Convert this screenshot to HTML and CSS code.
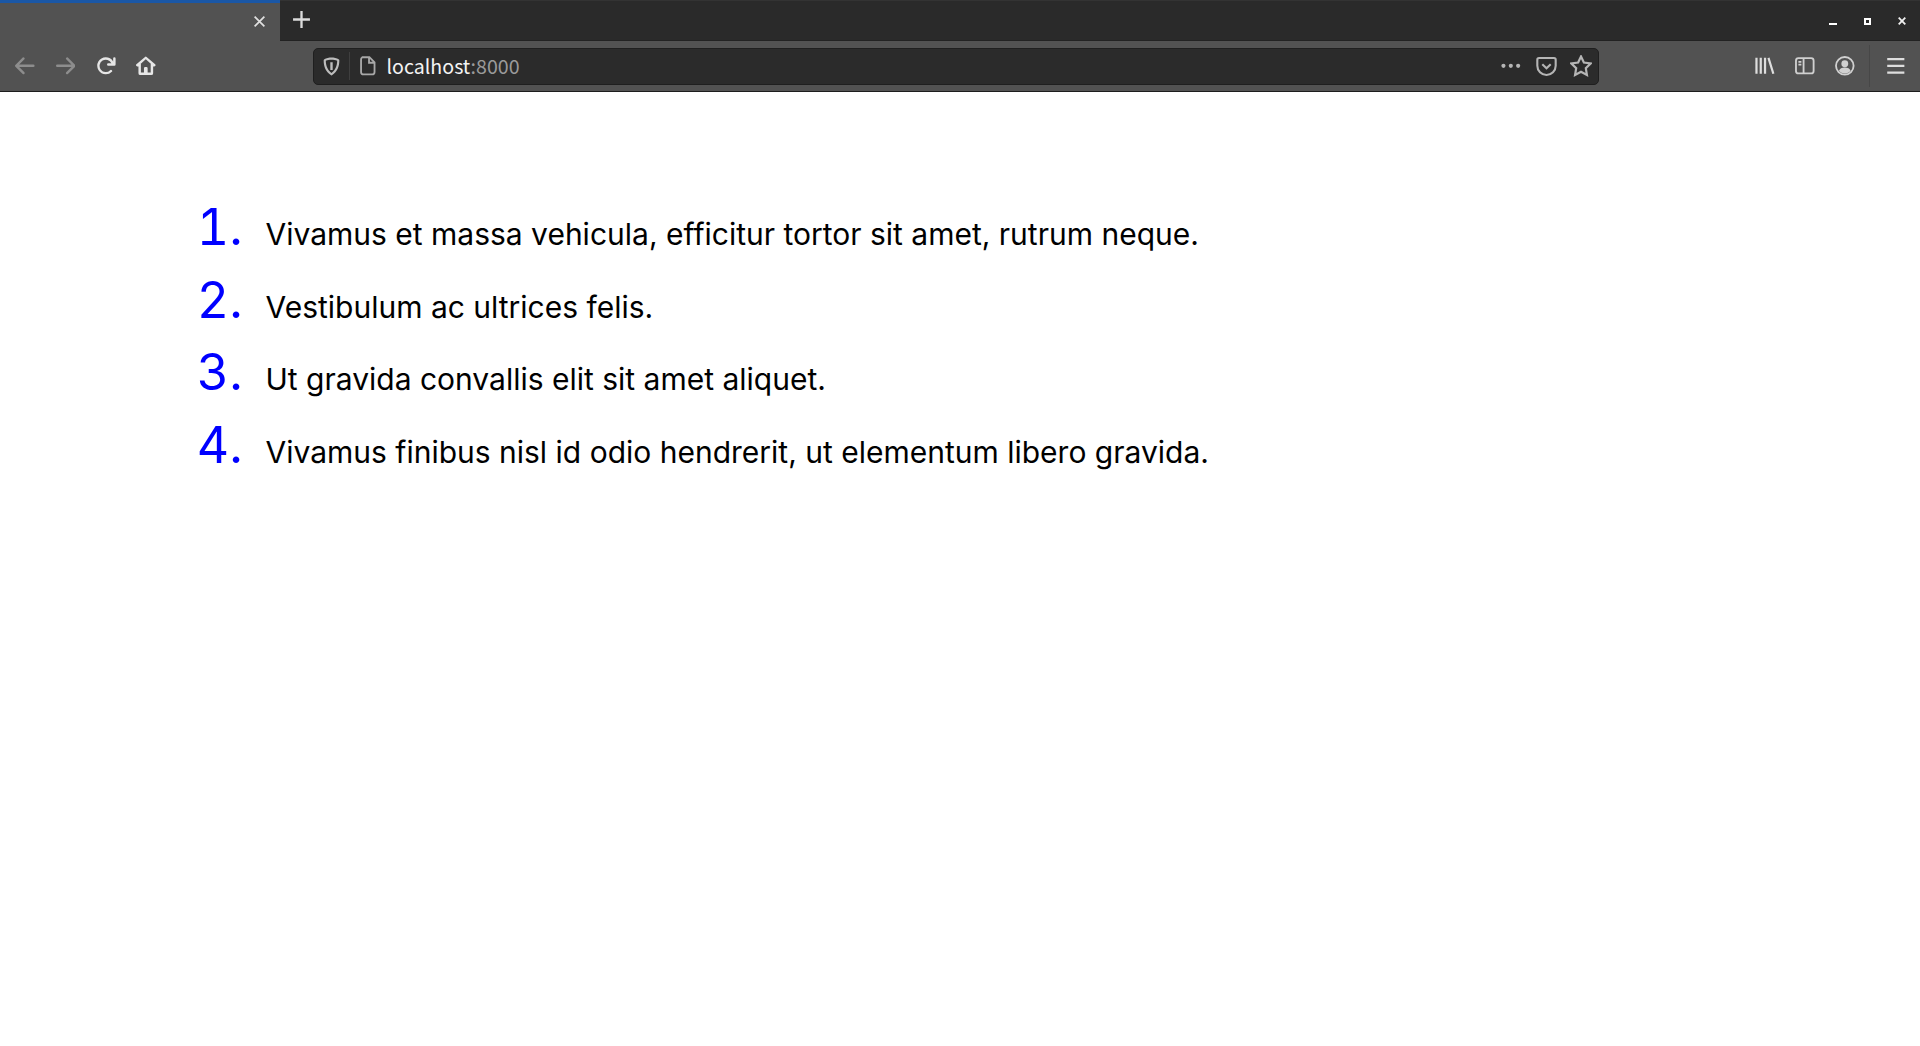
FILE: index.html
```html
<!DOCTYPE html>
<html lang="en">
<head>
<meta charset="utf-8">
<title>localhost:8000</title>
<link rel="stylesheet" href="styles.css">
</head>
<body>
<header class="browser">
  <div class="tabbar">
    <div class="tab">
      <svg class="tab-close" viewBox="0 0 12 12"><path d="M1.500 1.500l9 9M10.500 1.500l-9 9"/></svg>
    </div>
    <svg class="new-tab" viewBox="0 0 18 18"><path d="M9 1v16M1 9h16"/></svg>
    <div class="window-controls">
      <span class="win-min"></span>
      <span class="win-max"></span>
      <svg class="win-close" viewBox="0 0 8 8"><path d="M.7.7l6.600 6.600M7.300.7L.7 7.300"/></svg>
    </div>
  </div>
  <div class="toolbar">
    <div class="nav-buttons">
      <span class="btn"><svg class="ico dim" viewBox="0 0 16 16"><path d="M15 7H3.400l4.300-4.300a1 1 0 0 0-1.400-1.400l-6 6a1 1 0 0 0 0 1.400l6 6a1 1 0 0 0 1.400-1.400L3.400 9H15a1 1 0 0 0 0-2z"/></svg></span>
      <span class="btn"><svg class="ico dim" viewBox="0 0 16 16"><path d="M1 7h11.600L8.300 2.700a1 1 0 0 1 1.400-1.400l6 6a1 1 0 0 1 0 1.400l-6 6a1 1 0 0 1-1.400-1.400L12.600 9H1a1 1 0 0 1 0-2z"/></svg></span>
      <span class="btn"><svg class="ico" viewBox="0 0 16 16"><path d="M15 1a1 1 0 0 0-1 1v2.418A6.995 6.995 0 1 0 8 15a6.954 6.954 0 0 0 4.950-2.050 1 1 0 0 0-1.414-1.414A5.019 5.019 0 1 1 12.549 6H10a1 1 0 0 0 0 2h5a1 1 0 0 0 1-1V2a1 1 0 0 0-1-1z"/></svg></span>
      <span class="btn"><svg class="ico home" viewBox="0 0 16 16"><path fill-rule="evenodd" d="M8 .5a1 1 0 0 1 .65.24l7 6a1 1 0 0 1-.65 1.760h-1V14a1.500 1.500 0 0 1-1.500 1.500h-9A1.500 1.500 0 0 1 2 14V8.500H1a1 1 0 0 1-.65-1.760l7-6A1 1 0 0 1 8 .5zM8 2.700L3.700 6.500H4V13.500h2.500V10a1 1 0 0 1 1-1h1a1 1 0 0 1 1 1v3.500H12V6.500h.3z"/></svg></span>
    </div>
    <div class="urlbar">
      <svg class="ico-url shield" viewBox="0 0 16 16"><path fill-rule="evenodd" d="M8 .5c2 0 4.500.5 6 1.300.4.2.6.6.6 1 0 5-1.600 9.800-6.200 12.600a.8.8 0 0 1-.8 0C3 12.600 1.400 7.800 1.400 2.800c0-.4.2-.8.6-1C3.500 1 6 .5 8 .5zM8 2.300c-1.600 0-3.500.3-4.800.9.100 4 1.400 7.800 4.800 10.200 3.400-2.400 4.700-6.200 4.800-10.200C11.500 2.600 9.600 2.300 8 2.300zM7 4.500h2v6.500H7z"/></svg>
      <span class="url-sep"></span>
      <svg class="ico-url page" viewBox="0 0 16 16"><path d="M3.500 1h5.800L13.500 5.200V13a2 2 0 0 1-2 2h-7a2 2 0 0 1-2-2V3a2 2 0 0 1 1-2zM9 1.200V5.500h4.300"/></svg>
      <span class="url-text">localhost<span class="url-port">:8000</span></span>
      <span class="url-actions">
        <svg class="ico-url dots" viewBox="0 0 16 16"><circle cx="2" cy="8" r="1.700"/><circle cx="8" cy="8" r="1.700"/><circle cx="14" cy="8" r="1.700"/></svg>
        <svg class="ico-url pocket" viewBox="0 0 16 16"><path d="M2.300 1.500h11.400c.7 0 1.300.6 1.300 1.300V7.500A7 7 0 0 1 1 7.500V2.800c0-.7.600-1.300 1.300-1.300z"/><path d="M4.800 6.200L8 9.300l3.200-3.100"/></svg>
        <svg class="ico-url star" viewBox="0 0 16 16"><path d="M8 1.100l2.100 4.400 4.900.7-3.500 3.400.8 4.900L8 12.200l-4.300 2.300.8-4.900L1 6.200l4.900-.7z"/></svg>
      </span>
    </div>
    <div class="tools">
      <span class="btn tool"><svg class="ico-line" viewBox="0 0 16 16"><path d="M1.200 1.500v13M4.700 1.500v13M8.200 1.500v13M11 1.500l4 13"/></svg></span>
      <span class="btn tool"><svg class="ico-line thin" viewBox="0 0 16 16"><rect x=".8" y="1.800" width="14.400" height="12.400" rx="2"/><path d="M7 2v12M2.800 4.800h2.400M2.800 7h2.400"/></svg></span>
      <span class="btn tool"><svg class="ico-line thin" viewBox="0 0 16 16"><circle cx="8" cy="8" r="7.200"/><circle class="solid" cx="8" cy="6.300" r="2.800"/><path class="solid" d="M3.200 12.300c.5-2 2.500-2.900 4.800-2.900s4.300.9 4.800 2.900A6 6 0 0 1 8 14.300a6 6 0 0 1-4.800-2z"/></svg></span>
      <span class="tool-sep"></span>
      <span class="btn tool"><svg class="ico-line" viewBox="0 0 16 16"><path d="M1 2.500h14M1 8h14M1 13.500h14"/></svg></span>
    </div>
  </div>
</header>
<main class="content">
  <ol class="items">
    <li>Vivamus et massa vehicula, efficitur tortor sit amet, rutrum neque.</li>
    <li>Vestibulum ac ultrices felis.</li>
    <li>Ut gravida convallis elit sit amet aliquet.</li>
    <li>Vivamus finibus nisl id odio hendrerit, ut elementum libero gravida.</li>
  </ol>
</main>
</body>
</html>
```
FILE: styles.css
```css
* { box-sizing: border-box; }
html, body { margin: 0; padding: 0; height: 100%; background: #fff; overflow: hidden; }
body { font-family: Inter, "Liberation Sans", sans-serif; }

.browser { display: flex; flex-direction: column; height: 92px; background: #525252; border-bottom: 1px solid #1d1d1d; }

.tabbar { display: flex; align-items: center; height: 41px; background: #2a2a2a; border-top: 1px solid #333; border-bottom: 1px solid #222; }
.tab { display: flex; align-items: center; justify-content: flex-end; width: 280px; height: 41px; margin-top: -1px; padding: 0 14px 0 0; background: #525252; border-top: 3px solid #1a57a6; flex: none; }
.tab-close { width: 13px; height: 13px; fill: none; stroke: #e0e0e0; stroke-width: 1.600; }
.new-tab { width: 19px; height: 19px; margin-left: 12px; margin-top: -2px; fill: none; stroke: #dcdcdc; stroke-width: 2.200; }

.window-controls { display: flex; align-items: center; margin-left: auto; height: 100%; padding-right: 14px; }
.win-min { width: 8px; height: 2px; margin-top: 7px; background: #fff; }
.win-max { width: 7px; height: 7px; margin-left: 27px; margin-top: 1px; border: 2px solid #fff; }
.win-close { width: 8px; height: 8px; margin-left: 27px; fill: none; stroke: #f0f0f0; stroke-width: 1.800; }

.toolbar { display: flex; align-items: center; height: 50px; flex: none; padding-left: 5px; }
.nav-buttons { display: flex; flex: none; }
.btn { display: flex; align-items: center; justify-content: center; width: 40.400px; height: 40px; flex: none; }
.btn.tool { width: 40px; }
.ico { width: 19.600px; height: 19.600px; fill: #e6e6e6; }
.ico.dim { fill: #8d8d8d; }
.ico.home { margin-left: -1px; }
.ico-line { width: 19.600px; height: 19.600px; fill: none; stroke: #dedede; stroke-width: 1.800; }
.ico-line.thin { stroke-width: 1.500; stroke: #d0d0d0; }
.ico-line .solid { fill: #d0d0d0; stroke: none; }

.urlbar { display: flex; align-items: center; width: 1286px; height: 37px; margin-left: 146.400px; padding: 0 5.600px 0 8px; background: #2b2b2b; border: 1px solid #1f1f1f; border-radius: 5px; flex: none; }
.ico-url { width: 19.600px; height: 19.600px; flex: none; }
.shield { width: 19px; height: 19px; fill: #bdbdbd; }
.url-sep { width: 1px; height: 28px; margin: 0 8px; background: #3f3f3f; flex: none; }
.page { margin-right: 9px; fill: none; stroke: #a8a8a8; stroke-width: 1.500; }
.url-text { color: #f4f4f4; font: 19.600px/1 "Noto Sans CJK JP", "Noto Sans", sans-serif; white-space: nowrap; }
.url-port { color: #9a9a9a; }
.url-actions { display: flex; align-items: center; gap: 13.500px; margin-left: auto; }
.dots { fill: #b5b5b5; margin-right: 1.800px; }
.pocket, .star { fill: none; stroke: #b5b5b5; stroke-width: 1.600; }
.pocket { width: 21px; height: 21px; }
.star { width: 22px; height: 22px; }

.tools { display: flex; align-items: center; flex: none; margin-left: auto; padding-right: 4px; }
.tool-sep { width: 1px; height: 42px; margin: 0 6px 0 4px; background: #474747; flex: none; }

.content { padding: 106px 0 0 158.700px; }
.items { list-style: none; margin: 0; padding: 0; counter-reset: n; }
.items li { display: flex; align-items: baseline; height: 72.700px; counter-increment: n; font-size: 30px; color: #000; }
.items li::before { content: counter(n) "."; flex: none; width: 84px; padding-right: 22.800px; text-align: right; font-size: 50px; line-height: 59px; color: #0000ff; font-variant-numeric: tabular-nums; }
```
